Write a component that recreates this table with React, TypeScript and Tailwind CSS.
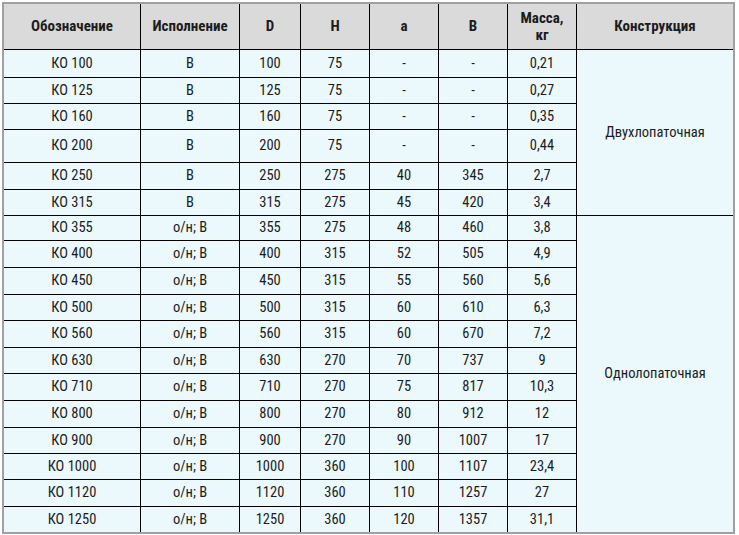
import React from 'react';

// --- Table data ---
type Row = { name: string; ver: string; d: string; h: string; a: string; b: string; m: string; hc: string };

const rows: Row[] = [
  { name: 'КО 100', ver: 'В', d: '100', h: '75', a: '-', b: '-', m: '0,21', hc: 'h-[28px]' },
  { name: 'КО 125', ver: 'В', d: '125', h: '75', a: '-', b: '-', m: '0,27', hc: 'h-[26px]' },
  { name: 'КО 160', ver: 'В', d: '160', h: '75', a: '-', b: '-', m: '0,35', hc: 'h-[26px]' },
  { name: 'КО 200', ver: 'В', d: '200', h: '75', a: '-', b: '-', m: '0,44', hc: 'h-[33px]' },
  { name: 'КО 250', ver: 'В', d: '250', h: '275', a: '40', b: '345', m: '2,7', hc: 'h-[27px]' },
  { name: 'КО 315', ver: 'В', d: '315', h: '275', a: '45', b: '420', m: '3,4', hc: 'h-[26px]' },
  { name: 'КО 355', ver: 'о/н; В', d: '355', h: '275', a: '48', b: '460', m: '3,8', hc: 'h-[25px]' },
  { name: 'КО 400', ver: 'о/н; В', d: '400', h: '315', a: '52', b: '505', m: '4,9', hc: 'h-[27px]' },
  { name: 'КО 450', ver: 'о/н; В', d: '450', h: '315', a: '55', b: '560', m: '5,6', hc: 'h-[27px]' },
  { name: 'КО 500', ver: 'о/н; В', d: '500', h: '315', a: '60', b: '610', m: '6,3', hc: 'h-[26px]' },
  { name: 'КО 560', ver: 'о/н; В', d: '560', h: '315', a: '60', b: '670', m: '7,2', hc: 'h-[27px]' },
  { name: 'КО 630', ver: 'о/н; В', d: '630', h: '270', a: '70', b: '737', m: '9', hc: 'h-[26px]' },
  { name: 'КО 710', ver: 'о/н; В', d: '710', h: '270', a: '75', b: '817', m: '10,3', hc: 'h-[27px]' },
  { name: 'КО 800', ver: 'о/н; В', d: '800', h: '270', a: '80', b: '912', m: '12', hc: 'h-[27px]' },
  { name: 'КО 900', ver: 'о/н; В', d: '900', h: '270', a: '90', b: '1007', m: '17', hc: 'h-[26px]' },
  { name: 'КО 1000', ver: 'о/н; В', d: '1000', h: '360', a: '100', b: '1107', m: '23,4', hc: 'h-[26px]' },
  { name: 'КО 1120', ver: 'о/н; В', d: '1120', h: '360', a: '110', b: '1257', m: '27', hc: 'h-[27px]' },
  { name: 'КО 1250', ver: 'о/н; В', d: '1250', h: '360', a: '120', b: '1357', m: '31,1', hc: 'h-[25px]' },
];

const headers = ['Обозначение', 'Исполнение', 'D', 'H', 'a', 'B'];

const Cell: React.FC<{ children: React.ReactNode; last?: boolean; className?: string }> = ({ children, last, className = '' }) => (
  <div className={`flex items-center justify-center border-r border-black ${last ? '' : 'border-b'} ${className}`}>
    {children}
  </div>
);

export default function App() {
  return (
    <div className="bg-white w-[739px] h-[535px] p-[2px] font-['Roboto_Condensed','Open_Sans',sans-serif]">
      <div className="border-2 border-[#a0a0a0] w-[733px] bg-[#ebf8fc] text-[14.5px] text-[#1c1c1c]">
        <div className="grid grid-cols-[137px_99px_61px_69px_69px_69px_69px_156px]">
          {/* header */}
          {headers.map((h) => (
            <div key={h} className="h-[46px] flex items-center justify-center bg-[#dadada] border-r border-b border-black font-bold text-[15px]">
              {h}
            </div>
          ))}
          <div className="h-[46px] flex items-center justify-center text-center leading-[17px] bg-[#dadada] border-r border-b border-black font-bold text-[15px]">
            Масса,<br />кг
          </div>
          <div className="h-[46px] flex items-center justify-center bg-[#dadada] border-b border-black font-bold text-[15px]">
            Конструкция
          </div>

          {/* construction column */}
          <div className="col-start-8 row-start-2 row-span-6 flex items-center justify-center border-b border-black">
            Двухлопаточная
          </div>
          <div className="col-start-8 row-start-8 row-span-12 flex items-center justify-center">
            Однолопаточная
          </div>

          {/* body */}
          {rows.map((r, i) => {
            const last = i === rows.length - 1;
            return (
              <React.Fragment key={r.name}>
                <Cell last={last} className={r.hc}>{r.name}</Cell>
                <Cell last={last} className={r.hc}>{r.ver}</Cell>
                <Cell last={last} className={r.hc}>{r.d}</Cell>
                <Cell last={last} className={r.hc}>{r.h}</Cell>
                <Cell last={last} className={r.hc}>{r.a}</Cell>
                <Cell last={last} className={r.hc}>{r.b}</Cell>
                <Cell last={last} className={r.hc}>{r.m}</Cell>
              </React.Fragment>
            );
          })}
        </div>
      </div>
    </div>
  );
}
